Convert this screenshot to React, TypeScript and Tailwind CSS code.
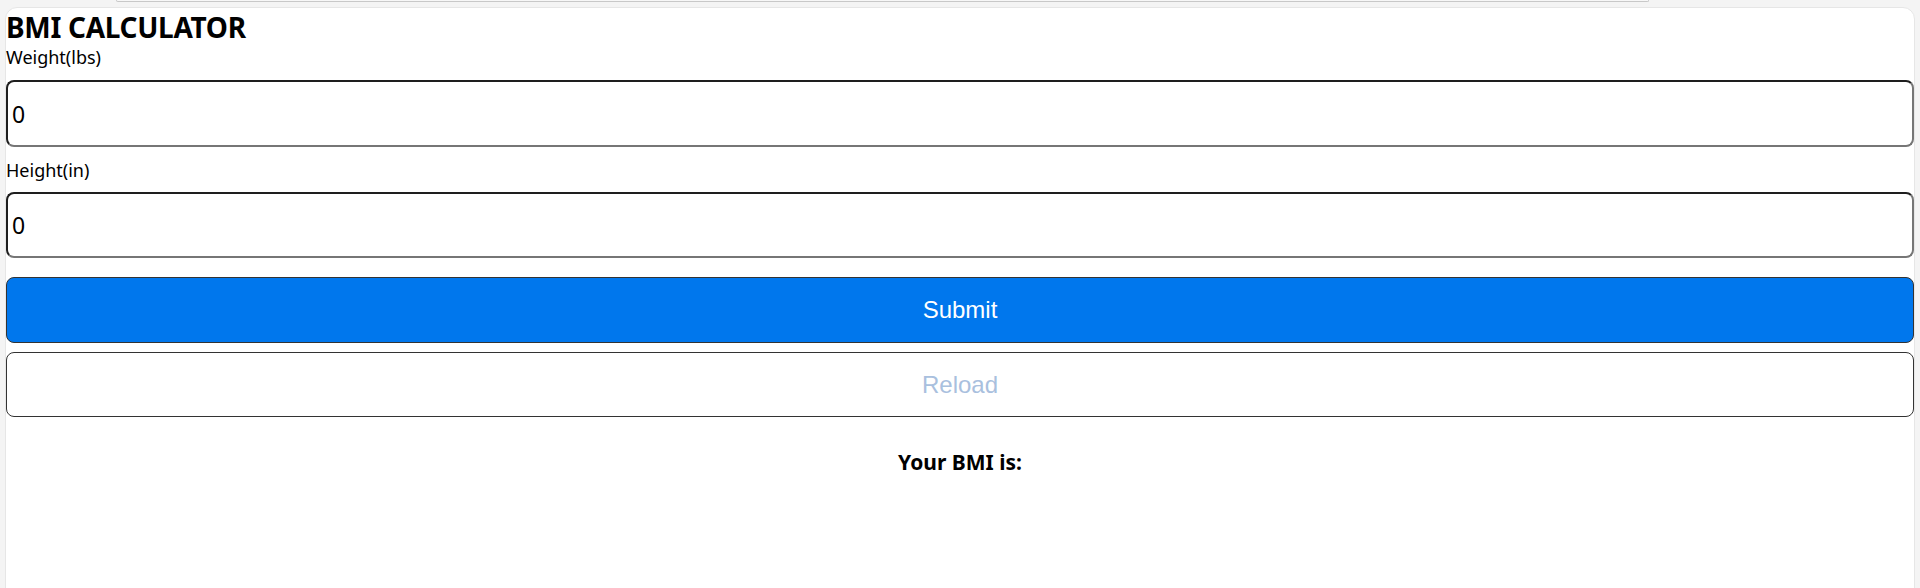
import { useState } from 'react';

export default function App() {
  const [weight, setWeight] = useState('0');
  const [height, setHeight] = useState('0');
  const [bmi, setBmi] = useState('');

  const handleSubmit = () => {
    const w = parseFloat(weight);
    const h = parseFloat(height);
    if (!w || !h) return setBmi('');
    setBmi(((w / (h * h)) * 703).toFixed(1));
  };

  return (
    <div className="min-h-[588px] bg-[#f4f4f4] font-['Noto_Sans',sans-serif] text-black">
      {/* top strip leftover from the parent frame */}
      <div className="ml-[116px] w-[1533px] h-[2px] border-x border-b border-[#c8c8c8] rounded-b-[6px] bg-[#f7f7f7]" />

      <div className="ml-[5px] mr-[5px] mt-[5px] min-h-[600px] bg-white border border-[#e6e6e6] rounded-t-[12px] pb-6">
        <h1 className="mt-[2px] text-[28px] leading-[34px] font-bold tracking-[-0.3px]">BMI CALCULATOR</h1>

        <div className="flex flex-col">
          <label className="text-[18px] leading-[24px] mt-[1px]">Weight(lbs)</label>
          <input
            value={weight}
            onChange={(e) => setWeight(e.target.value)}
            className="mt-[11px] h-[67px] w-full rounded-lg border-2 border-t-[#1e1e1e] border-l-[#1e1e1e] border-r-[#767676] border-b-[#767676] px-[4px] text-[23px] outline-none"
          />

          <label className="text-[18px] leading-[24px] mt-[11px]">Height(in)</label>
          <input
            value={height}
            onChange={(e) => setHeight(e.target.value)}
            className="mt-[10px] h-[66px] w-full rounded-lg border-2 border-t-[#1e1e1e] border-l-[#1e1e1e] border-r-[#767676] border-b-[#767676] px-[4px] text-[23px] outline-none"
          />

          <button
            onClick={handleSubmit}
            className="mt-[19px] h-[66px] w-full rounded-lg border border-[#333] bg-[#0077ed] text-white text-[24px] font-['Liberation_Sans',Arial,sans-serif]"
          >
            Submit
          </button>
          <button
            onClick={() => {
              setWeight('0');
              setHeight('0');
              setBmi('');
            }}
            className="mt-[9px] h-[65px] w-full rounded-lg border border-[#333] bg-white text-[#a9c0de] text-[24px] font-['Liberation_Sans',Arial,sans-serif]"
          >
            Reload
          </button>
        </div>

        <div className="mt-[31px] text-center text-[21px] leading-[28px] font-bold">
          Your BMI is: {bmi}
        </div>
      </div>
    </div>
  );
}
